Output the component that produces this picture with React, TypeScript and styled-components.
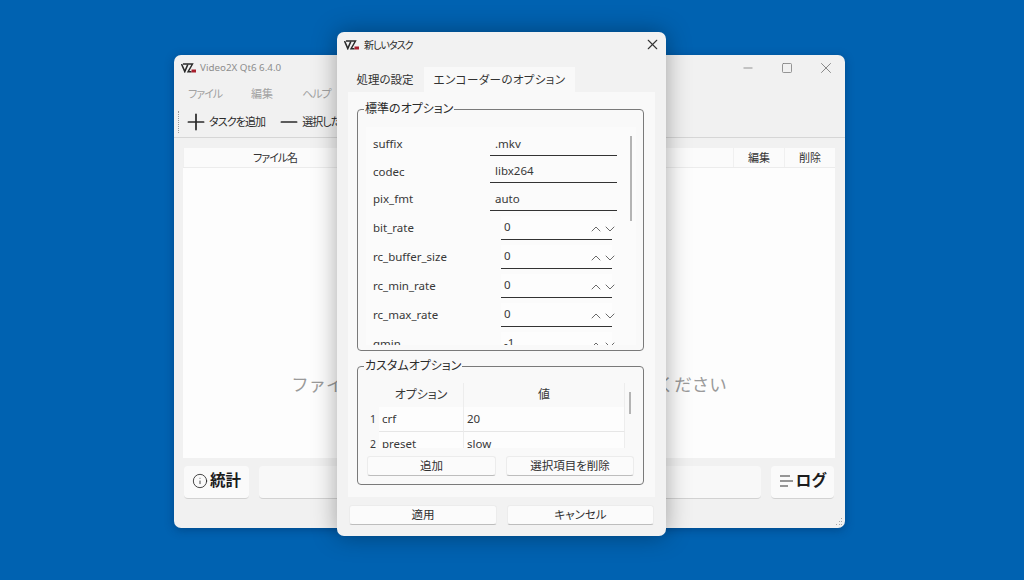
import styled, { createGlobalStyle } from 'styled-components';
import { ChevronDown, ChevronUp, Info, Minus, Plus, Square, X } from 'lucide-react';

const GlobalStyle = createGlobalStyle`
  html, body {
    margin: 0;
    height: 100%;
    overflow: hidden;
    background: #0062b1;
    font-family: "Noto Sans", "Noto Sans CJK JP", sans-serif;
    font-feature-settings: "palt";
    line-height: 1.2;
  }
`;

const Desktop = styled.div`
  position: relative;
  width: 1024px;
  height: 580px;
  background: #0062b1;
  overflow: hidden;
`;

const Kana = styled.span`
  letter-spacing: -1px;
`;

/* Main application window */
const MainWindow = styled.section`
  position: absolute;
  left: 174px;
  top: 55px;
  width: 671px;
  height: 473px;
  display: flex;
  flex-direction: column;
  background: #f1f1f1;
  border-radius: 7px;
  box-shadow: 0 2px 10px rgba(0, 30, 70, 0.35);
  overflow: hidden;
`;

const MainTitleBar = styled.div`
  height: 25px;
  flex: none;
  display: flex;
  align-items: center;
  padding-left: 7px;
  gap: 4px;
  font-size: 9.8px;
  color: #8d8d8d;
`;

const WindowControls = styled.div`
  margin-left: auto;
  display: flex;
  color: #7d7d7d;
`;

const WindowControl = styled.span`
  width: 39px;
  height: 25px;
  display: flex;
  align-items: center;
  justify-content: center;
`;

const MenuBar = styled.nav`
  height: 27px;
  flex: none;
  display: flex;
  align-items: center;
  padding-left: 14px;
  gap: 29px;
  font-size: 11px;
  color: #a2a2a2;
`;

const Toolbar = styled.div`
  height: 30px;
  flex: none;
  display: flex;
  align-items: center;
  padding-left: 4px;
  border-bottom: 1px solid #d6d6d6;
  font-size: 11px;
  color: #2a2a2a;
`;

const Grip = styled.span`
  width: 0;
  height: 22px;
  border-left: 1px dotted #9a9a9a;
  margin-right: 4px;
`;

const ToolButton = styled.span`
  display: flex;
  align-items: center;
  margin-right: 11px;
  white-space: nowrap;
  letter-spacing: -0.9px;
`;

const TableArea = styled.div`
  height: 310px;
  flex: none;
  margin: 10px 10px 0 9px;
  display: flex;
  flex-direction: column;
  background: #fdfdfd;
`;

const TableHeader = styled.div`
  height: 19px;
  flex: none;
  display: flex;
  border-bottom: 1px solid #ececec;
  background: #fbfbfb;
  font-size: 11px;
  color: #333;
`;

const HeaderCell = styled.span<{ $width?: number }>`
  display: flex;
  align-items: center;
  justify-content: center;
  width: ${({ $width }) => ($width ? `${$width}px` : 'auto')};
  flex: ${({ $width }) => ($width ? 'none' : '1')};
  border-left: 1px solid #f0f0f0;
`;

const DropHint = styled.div`
  flex: 1;
  display: flex;
  align-items: center;
  justify-content: center;
  padding-top: 142px;
  font-size: 17.5px;
  font-feature-settings: normal;
  color: #9a9a9a;
  white-space: nowrap;
`;

const StatusRow = styled.div`
  flex: none;
  height: 33px;
  margin: 8px 11px 0 10px;
  display: flex;
  gap: 10px;
`;

const StatusButton = styled.div<{ $width: number }>`
  width: ${({ $width }) => $width}px;
  flex: none;
  display: flex;
  align-items: center;
  justify-content: center;
  gap: 2px;
  padding-bottom: 3px;
  background: #fafafa;
  border-radius: 4px;
  border-bottom: 1px solid #d2d2d2;
  font-size: 15.5px;
  font-weight: 700;
  color: #1c1c1c;
  box-sizing: border-box;
`;

const ProgressBar = styled.div`
  flex: 1;
  background: #f8f8f8;
  border-radius: 4px;
  border-bottom: 1px solid #d2d2d2;
`;

const ResizeGrip = styled.svg`
  position: absolute;
  right: 2px;
  bottom: 2px;
`;

/* New task dialog */
const Dialog = styled.section`
  position: absolute;
  left: 337px;
  top: 32px;
  width: 329px;
  height: 504px;
  display: flex;
  flex-direction: column;
  background: #f2f2f2;
  border-radius: 7px;
  box-shadow: 0 0 24px rgba(0, 0, 0, 0.34);
  overflow: hidden;
`;

const DialogTitleBar = styled.div`
  height: 25px;
  flex: none;
  display: flex;
  align-items: center;
  padding: 0 5px 0 7px;
  gap: 5px;
  font-size: 10px;
  color: #2b2b2b;
`;

const CloseButton = styled.span`
  margin-left: auto;
  display: flex;
  color: #333;
`;

const Tabs = styled.div`
  height: 25px;
  flex: none;
  margin-top: 10px;
  padding-left: 10px;
  display: flex;
  font-size: 11.5px;
  color: #333;
`;

const Tab = styled.span<{ $active?: boolean; $width: number }>`
  width: ${({ $width }) => $width}px;
  display: flex;
  align-items: center;
  justify-content: center;
  background: ${({ $active }) => ($active ? '#f9f9f9' : 'transparent')};
  letter-spacing: ${({ $active }) => ($active ? '0.4px' : '0')};
  margin-right: 1px;
`;

const TabPane = styled.div`
  height: 405px;
  flex: none;
  margin: 0 11px;
  padding: 17px 11px 0 9px;
  background: #f9f9f9;
  box-sizing: border-box;
  display: flex;
  flex-direction: column;
  gap: 15px;
`;

const GroupBox = styled.fieldset<{ $height: number }>`
  position: relative;
  height: ${({ $height }) => $height}px;
  flex: none;
  margin: 0;
  padding: 0;
  border: 1px solid #7a7a7a;
  border-radius: 4px;
  box-sizing: border-box;
  min-width: 0;
`;

const GroupTitle = styled.span`
  position: absolute;
  left: 6px;
  top: -9px;
  padding: 0 1px;
  background: #f9f9f9;
  font-size: 12px;
  line-height: 16px;
  color: #2b2b2b;
`;

const OptionScroll = styled.div`
  position: relative;
  height: 218px;
  margin: 17px 7px 0 8px;
  padding-top: 3.5px;
  box-sizing: border-box;
  background: #fbfbfb;
  overflow: hidden;
  font-size: 11.5px;
  color: #383838;
`;

const ScrollThumb = styled.span<{ $top: number; $height: number; $right: number }>`
  position: absolute;
  right: ${({ $right }) => $right}px;
  top: ${({ $top }) => $top}px;
  width: 2px;
  height: ${({ $height }) => $height}px;
  background: #b4b4b4;
`;

const OptionRow = styled.div<{ $height: number }>`
  height: ${({ $height }) => $height}px;
  display: flex;
  align-items: center;
  padding-left: 7px;
`;

const OptionLabel = styled.span`
  width: 117px;
  flex: none;
`;

const TextInput = styled.span`
  width: 127px;
  height: 23px;
  display: flex;
  align-items: center;
  padding-left: 5px;
  box-sizing: border-box;
  border-bottom: 1px solid #333;
`;

const SpinInput = styled.span`
  position: relative;
  width: 111px;
  height: 24px;
  margin-left: 11px;
  display: flex;
  align-items: center;
  padding-left: 3px;
  box-sizing: border-box;
  background: #fdfdfd;
  border-bottom: 1px solid #333;
`;

const SpinArrows = styled.span`
  position: absolute;
  right: -6px;
  top: 5px;
  display: flex;
  gap: 0;
  color: #5f5f5f;

  svg + svg {
    margin-left: -2px;
  }
`;

const CustomTable = styled.div`
  position: relative;
  height: 65px;
  margin: 16px 8px 0 9px;
  overflow: hidden;
  font-size: 11.5px;
  color: #383838;
`;

const CustomRow = styled.div<{ $height: number; $header?: boolean }>`
  height: ${({ $height }) => $height}px;
  width: 258px;
  display: grid;
  grid-template-columns: 12px 85px 1fr;
  align-items: center;
  text-align: ${({ $header }) => ($header ? 'center' : 'left')};
`;

const RowHead = styled.span`
  text-align: center;
  font-size: 10.5px;
  align-self: stretch;
  display: flex;
  align-items: center;
  justify-content: center;
`;

const CustomCell = styled.span<{ $lined?: boolean }>`
  align-self: stretch;
  display: flex;
  align-items: center;
  justify-content: inherit;
  padding: 0 3px;
  background: #fdfdfd;
  border-right: 1px solid #ededed;
  border-bottom: 1px solid ${({ $lined }) => ($lined ? '#e6e6e6' : 'transparent')};
  box-sizing: border-box;
`;

const HeaderLabel = styled.span`
  align-self: stretch;
  display: flex;
  align-items: center;
  justify-content: center;
  border-right: 1px solid #ededed;
  font-size: 12px;
`;

const ButtonRow = styled.div<{ $gap: number; $margin: string }>`
  display: flex;
  gap: ${({ $gap }) => $gap}px;
  margin: ${({ $margin }) => $margin};
`;

const PushButton = styled.span<{ $width: number; $height: number }>`
  width: ${({ $width }) => $width}px;
  height: ${({ $height }) => $height}px;
  flex: none;
  display: flex;
  align-items: center;
  justify-content: center;
  padding-bottom: 1px;
  background: #fbfbfb;
  border: 1px solid #ececec;
  border-bottom-color: #bdbdbd;
  border-radius: 3px;
  box-sizing: border-box;
  font-size: 11.5px;
  color: #2f2f2f;
`;

const Logo = () => (
  <svg width="15" height="10" viewBox="0 0 15 10" fill="none">
    <path d="M0.5 1 L3.8 8.5 L6.8 1.5" stroke="#2a2a2a" strokeWidth="1.6" />
    <path d="M2 1 H11.5 L7 8.8 H10.5" stroke="#2a2a2a" strokeWidth="1.4" />
    <rect x="10.5" y="6.5" width="4.5" height="3" fill="#a8202e" />
  </svg>
);

const LogIcon = () => (
  <svg width="15" height="12" viewBox="0 0 15 12" fill="none" stroke="#333" strokeWidth="1.1">
    <path d="M1 1 H11 M1 6 H14 M1 11 H9" />
  </svg>
);

const textOptions = [
  { label: 'suffix', value: '.mkv' },
  { label: 'codec', value: 'libx264' },
  { label: 'pix_fmt', value: 'auto' },
];

const spinOptions = [
  { label: 'bit_rate', value: '0' },
  { label: 'rc_buffer_size', value: '0' },
  { label: 'rc_min_rate', value: '0' },
  { label: 'rc_max_rate', value: '0' },
  { label: 'qmin', value: '-1' },
];

export default function App() {
  return (
    <Desktop>
      <GlobalStyle />

      <MainWindow>
        <MainTitleBar>
          <Logo />
          Video2X Qt6 6.4.0
          <WindowControls>
            <WindowControl><Minus size={14} strokeWidth={1.4} /></WindowControl>
            <WindowControl><Square size={12} strokeWidth={1.6} /></WindowControl>
            <WindowControl><X size={18} strokeWidth={1.2} /></WindowControl>
          </WindowControls>
        </MainTitleBar>
        <MenuBar>
          <Kana>ファイル</Kana>
          <span>編集</span>
          <Kana>ヘルプ</Kana>
        </MenuBar>
        <Toolbar>
          <Grip />
          <ToolButton><Plus size={26} strokeWidth={1.6} />タスクを追加</ToolButton>
          <ToolButton><Minus size={26} strokeWidth={1.6} />選択したタスクを削除</ToolButton>
        </Toolbar>
        <TableArea>
          <TableHeader>
            <HeaderCell $width={182}><Kana>ファイル名</Kana></HeaderCell>
            <HeaderCell />
            <HeaderCell $width={50}>編集</HeaderCell>
            <HeaderCell $width={50}>削除</HeaderCell>
          </TableHeader>
          <DropHint>ファイルをここにドラッグアンドドロップしてください</DropHint>
        </TableArea>
        <StatusRow>
          <StatusButton $width={65}><Info size={16} strokeWidth={1.2} />統計</StatusButton>
          <ProgressBar />
          <StatusButton $width={63}><LogIcon />ログ</StatusButton>
        </StatusRow>
        <ResizeGrip width="8" height="8" viewBox="0 0 8 8" fill="#a9a9a9">
          <rect x="6" y="0" width="1" height="1" />
          <rect x="4" y="3" width="1" height="1" />
          <rect x="6" y="3" width="1" height="1" />
          <rect x="1" y="6" width="1" height="1" />
          <rect x="4" y="6" width="1" height="1" />
          <rect x="6" y="6" width="1" height="1" />
        </ResizeGrip>
      </MainWindow>

      <Dialog>
        <DialogTitleBar>
          <Logo />
          <Kana>新しいタスク</Kana>
          <CloseButton><X size={17} strokeWidth={1.5} /></CloseButton>
        </DialogTitleBar>
        <Tabs>
          <Tab $width={76}>処理の設定</Tab>
          <Tab $active $width={151}>エンコーダーのオプション</Tab>
        </Tabs>
        <TabPane>
          <GroupBox $height={242}>
            <GroupTitle>標準のオプション</GroupTitle>
            <OptionScroll>
              <ScrollThumb $top={9} $height={85} $right={4} />
              {textOptions.map((o) => (
                <OptionRow key={o.label} $height={27.5}>
                  <OptionLabel>{o.label}</OptionLabel>
                  <TextInput>{o.value}</TextInput>
                </OptionRow>
              ))}
              {spinOptions.map((o) => (
                <OptionRow key={o.label} $height={29}>
                  <OptionLabel>{o.label}</OptionLabel>
                  <SpinInput>
                    {o.value}
                    <SpinArrows>
                      <ChevronUp size={16} strokeWidth={1.4} />
                      <ChevronDown size={16} strokeWidth={1.4} />
                    </SpinArrows>
                  </SpinInput>
                </OptionRow>
              ))}
            </OptionScroll>
          </GroupBox>
          <GroupBox $height={119}>
            <GroupTitle>カスタムオプション</GroupTitle>
            <CustomTable>
              <ScrollThumb $top={9} $height={22} $right={4} />
              <CustomRow $height={24} $header>
                <span />
                <HeaderLabel>オプション</HeaderLabel>
                <HeaderLabel>値</HeaderLabel>
              </CustomRow>
              <CustomRow $height={25}>
                <RowHead>1</RowHead>
                <CustomCell $lined>crf</CustomCell>
                <CustomCell $lined>20</CustomCell>
              </CustomRow>
              <CustomRow $height={25}>
                <RowHead>2</RowHead>
                <CustomCell>preset</CustomCell>
                <CustomCell>slow</CustomCell>
              </CustomRow>
            </CustomTable>
            <ButtonRow $gap={10} $margin="8px 0 0 9px">
              <PushButton $width={129} $height={20}>追加</PushButton>
              <PushButton $width={128} $height={20}>選択項目を削除</PushButton>
            </ButtonRow>
          </GroupBox>
        </TabPane>
        <ButtonRow $gap={10} $margin="8px 0 0 12px">
          <PushButton $width={148} $height={20}>適用</PushButton>
          <PushButton $width={147} $height={20}>キャンセル</PushButton>
        </ButtonRow>
      </Dialog>
    </Desktop>
  );
}
